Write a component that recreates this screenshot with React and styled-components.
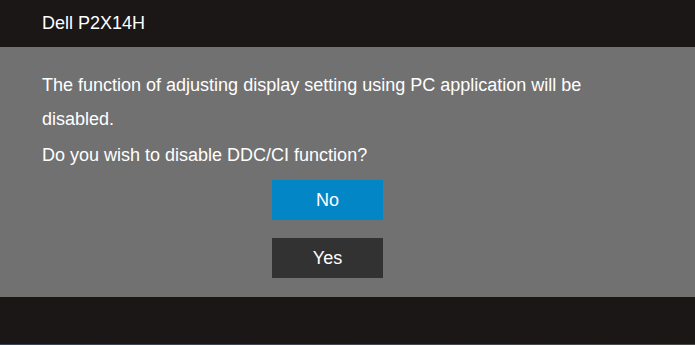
import styled, { createGlobalStyle } from 'styled-components'

const GlobalStyle = createGlobalStyle`
    html, body {
    margin: 0;
    padding: 0;
    background-color: #1b1717;
    }
`

const StyledScreen = styled.div`
    width: 695px;
    height: 345px;
    display: flex;
    flex-direction: column;
    font-family: "Liberation Sans", Arial, sans-serif;
    color: #ffffff;
    overflow: hidden;
`

const StyledHeader = styled.div`
    height: 47px;
    line-height: 47px;
    padding-left: 42px;
    font-size: 18px;
    background-color: #1b1717;
`

const StyledBody = styled.div`
    height: 250px;
    box-sizing: border-box;
    padding: 21px 0 0 42px;
    background-color: #717171;
    display: flex;
    flex-direction: column;
`

const StyledText = styled.p`
    width: 560px;
    font-size: 18px;
    line-height: 34px;
    margin: 0;
    margin-bottom: ${props => props.$gap || 0}px;
`

const StyledButtons = styled.div`
    display: flex;
    flex-direction: column;
    gap: 18px;
    margin-top: 8px;
    padding-left: 230px;
`

const StyledButton = styled.div`
    width: 111px;
    height: 40px;
    line-height: 40px;
    text-align: center;
    font-size: 18px;
    background-color: ${props => props.$active ? '#0286c6' : '#323232'};
`

const StyledFooter = styled.div`
    height: 47px;
    background-color: #1b1717;
    border-bottom: 1px solid;
    border-image: linear-gradient(to right, #3b4558, #4a4a4a) 1;
`

function App(){
    return (
        <StyledScreen>
            <GlobalStyle />
            <StyledHeader>Dell P2X14H</StyledHeader>
            <StyledBody>
                <StyledText $gap={2}>The function of adjusting display setting using PC application will be disabled.</StyledText>
                <StyledText>Do you wish to disable DDC/CI function?</StyledText>
                <StyledButtons>
                    <StyledButton $active>No</StyledButton>
                    <StyledButton>Yes</StyledButton>
                </StyledButtons>
            </StyledBody>
            <StyledFooter />
        </StyledScreen>
    )
}

export default App
